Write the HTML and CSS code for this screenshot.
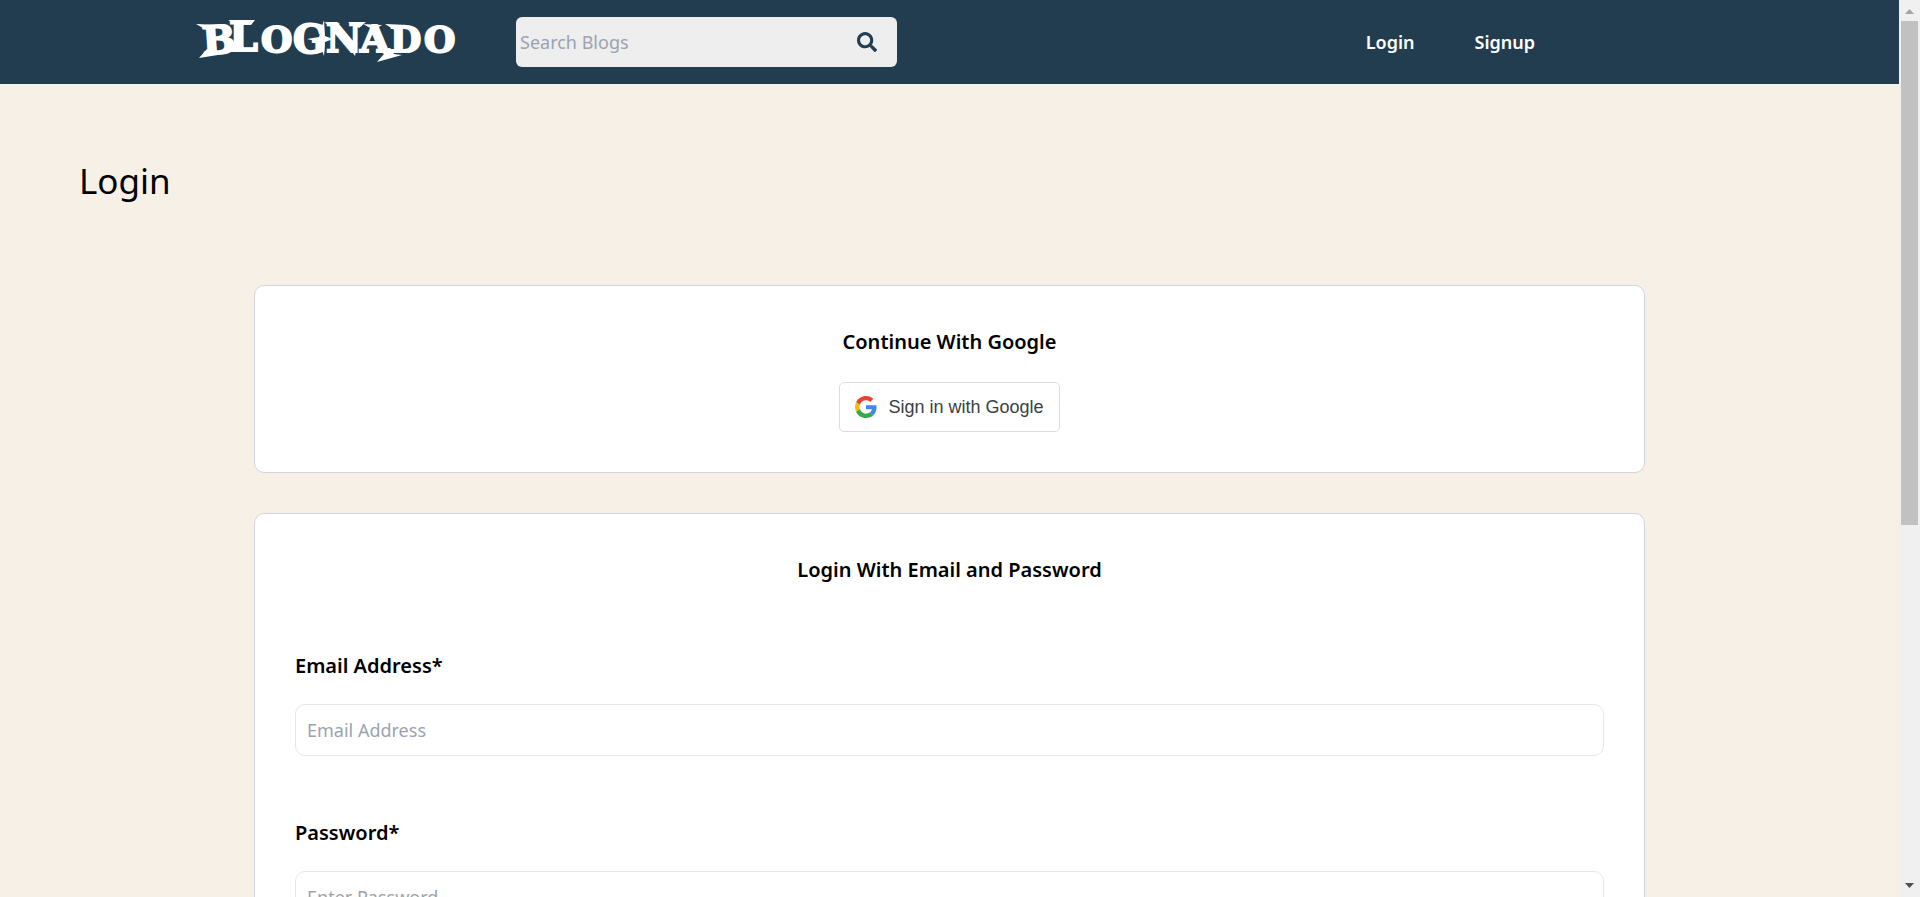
FILE: index.html
```html
<!DOCTYPE html>
<html lang="en">
<head>
<meta charset="utf-8">
<title>Blognado - Login</title>
<link rel="stylesheet" href="styles.css">
</head>
<body>
<div class="window">
  <div class="page">
    <header class="navbar">
      <a class="logo" href="#" aria-label="Blognado">
        <svg viewBox="0 -16 262 76" width="262" height="76" fill="#fff">
          <g class="logo-text">
            <text x="7" y="34" font-size="39" transform="rotate(-4 18 30)">B</text>
            <text x="33" y="31" font-size="41">L</text>
            <text x="65" y="32" font-size="36">O</text>
            <text x="97" y="33" font-size="39">G</text>
            <text x="130" y="32" font-size="39">N</text>
            <text x="164" y="32" font-size="38">A</text>
            <text x="194" y="32" font-size="36">D</text>
            <text x="228" y="32" font-size="36">O</text>
          </g>
          <path d="M0 4 24 5 14 12ZM3 38 11 29 28 34ZM32 0 59 0 55 5 42 5ZM111 19 123 17 128 0 129 16 137 19 129 22 128 36 123 22ZM128 2 144 3 136 8ZM152 2 170 2 163 8ZM152 26 159 36 161 26ZM167 4 186 5 178 10ZM181 42 188 34 180 29 194 28 198 34 206 35ZM189 4 212 5 200 11Z"/>
        </svg>
      </a>
      <form class="search" role="search">
        <input class="search-input" type="search" placeholder="Search Blogs" aria-label="Search Blogs">
        <button class="search-button" type="button" aria-label="Search">
          <svg viewBox="0 0 512 512" width="20" height="20" fill="#233d50"><path d="M505 442.700 405.300 343c-4.500-4.500-10.600-7-17-7H372c27.600-35.300 44-79.700 44-128C416 93.100 322.900 0 208 0S0 93.100 0 208s93.100 208 208 208c48.300 0 92.700-16.400 128-44v16.300c0 6.400 2.500 12.500 7 17l99.700 99.700c9.400 9.400 24.600 9.400 33.900 0l28.300-28.300c9.400-9.400 9.400-24.600.1-34zM208 336c-70.700 0-128-57.200-128-128 0-70.700 57.200-128 128-128 70.700 0 128 57.200 128 128 0 70.700-57.200 128-128 128z"/></svg>
        </button>
      </form>
      <nav class="links">
        <a href="#">Login</a>
        <a href="#">Signup</a>
      </nav>
    </header>
    <main>
      <h1 class="title">Login</h1>
      <div class="cards">
        <section class="card">
          <h2>Continue With Google</h2>
          <button class="google" type="button">
            <svg viewBox="0 0 48 48" width="22" height="22"><path fill="#EA4335" d="M24 9.500c3.540 0 6.710 1.220 9.210 3.600l6.850-6.850C35.900 2.380 30.470 0 24 0 14.620 0 6.510 5.380 2.560 13.220l7.980 6.190C12.430 13.720 17.740 9.500 24 9.500z"/><path fill="#4285F4" d="M46.980 24.550c0-1.570-.15-3.090-.38-4.550H24v9.020h12.940c-.58 2.960-2.260 5.480-4.780 7.180l7.730 6c4.510-4.180 7.090-10.360 7.090-17.650z"/><path fill="#FBBC05" d="M10.530 28.590A14.500 14.500 0 0 1 9.770 24c0-1.600.27-3.140.76-4.590l-7.980-6.190A23.900 23.900 0 0 0 0 24c0 3.880.92 7.540 2.560 10.780z"/><path fill="#34A853" d="M24 48c6.480 0 11.930-2.130 15.890-5.810l-7.730-6c-2.150 1.450-4.920 2.300-8.160 2.300-6.260 0-11.570-4.220-13.470-9.910l-7.980 6.190C6.510 42.620 14.620 48 24 48z"/></svg>
            <span>Sign in with Google</span>
          </button>
        </section>
        <section class="card">
          <h2>Login With Email and Password</h2>
          <form class="fields">
            <div class="field">
              <label for="email">Email Address*</label>
              <input id="email" type="email" placeholder="Email Address">
            </div>
            <div class="field">
              <label for="password">Password*</label>
              <input id="password" type="password" placeholder="Enter Password">
            </div>
          </form>
        </section>
      </div>
    </main>
  </div>
  <div class="scrollbar" aria-hidden="true">
    <svg viewBox="0 0 9 5" width="9" height="5" fill="#a3a3a3"><path d="M0 5 4.500 0 9 5Z"/></svg>
    <div class="track"><div class="thumb"></div></div>
    <svg viewBox="0 0 9 5" width="9" height="5" fill="#505050"><path d="M0 0 4.500 5 9 0Z"/></svg>
  </div>
</div>
</body>
</html>
```
FILE: styles.css
```css
* { box-sizing: border-box; }

body {
  margin: 0;
  background: #f7f0e6;
  color: #000;
  font-family: "Noto Sans", sans-serif;
  font-size: 18px;
}

input, button { font: inherit; }

.window {
  display: flex;
  height: 100vh;
  overflow: hidden;
}

.page {
  flex: 1;
  min-width: 0;
  overflow: hidden;
}

.navbar {
  display: flex;
  align-items: center;
  height: 84px;
  padding: 0 364px 0 196px;
  background: #233d50;
}

.logo {
  display: flex;
  margin-right: 58px;
}

.logo svg { overflow: visible; }

.logo-text {
  font-family: "DejaVu Serif", serif;
  font-weight: 700;
  stroke: #fff;
  stroke-width: 2px;
}

.search {
  display: flex;
  align-items: center;
  width: 381px;
  height: 50px;
  padding-right: 20px;
  border-radius: 6px;
  background: #eee;
}

.search-input {
  flex: 1;
  min-width: 0;
  padding: 0 4px;
  border: 0;
  outline: 0;
  background: none;
}

.search-button {
  display: flex;
  padding: 0;
  border: 0;
  background: none;
}

::placeholder {
  color: #9ca3af;
  opacity: 1;
}

.links {
  display: flex;
  gap: 60px;
  margin-left: auto;
}

.links a {
  color: #fff;
  font-weight: 600;
  line-height: 24px;
  text-decoration: none;
}

.title {
  margin: 0;
  padding: 72px 79px;
  font-size: 35px;
  font-weight: 400;
  line-height: 50px;
}

.cards {
  display: flex;
  flex-direction: column;
  gap: 40px;
  margin: 7px 254px 40px;
}

.card {
  display: flex;
  flex-direction: column;
  align-items: center;
  padding: 40px;
  border: 1px solid #d1d5db;
  border-radius: 10px;
  background: #fff;
}

.card h2 {
  margin: 0 0 24px;
  font-size: 20px;
  font-weight: 600;
  line-height: 32px;
}

.google {
  display: flex;
  align-items: center;
  gap: 11px;
  height: 50px;
  padding: 0 15px;
  border: 1px solid #dadce0;
  border-radius: 5px;
  background: #fff;
  color: #3c4043;
  font-family: "Liberation Sans", sans-serif;
}

.fields {
  display: flex;
  flex-direction: column;
  gap: 61px;
  align-self: stretch;
  margin-top: 40px;
}

.field {
  display: flex;
  flex-direction: column;
  gap: 22px;
}

.field label {
  font-size: 20px;
  font-weight: 600;
  line-height: 32px;
}

.field input {
  height: 52px;
  padding: 0 11px;
  border: 1px solid #e5e7eb;
  border-radius: 10px;
  background: #fff;
}

.scrollbar {
  display: flex;
  flex-direction: column;
  align-items: center;
  width: 21px;
  padding: 9px 0;
  background: #f0f0f0;
}

.track {
  flex: 1;
  width: 17px;
  padding: 7px 0;
}

.thumb {
  height: 59%;
  background: #c1c1c1;
}
```
